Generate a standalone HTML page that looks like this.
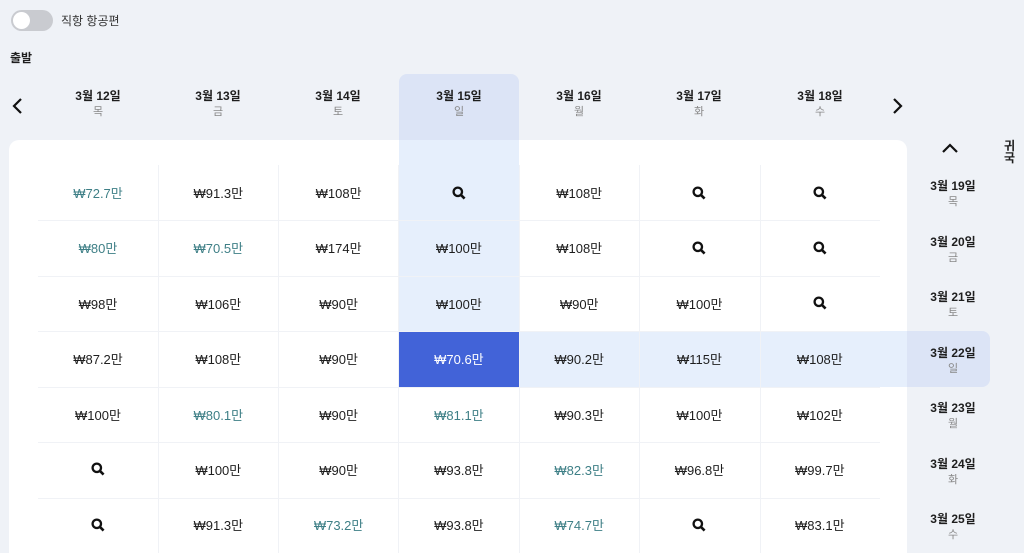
<!DOCTYPE html>
<html style="overflow:hidden;height:553px"><head><meta charset="utf-8"><style>
body{margin:0;width:1024px;height:553px;overflow:hidden;background:#eff2f7;font-family:"Liberation Sans","Noto Sans CJK KR",sans-serif;position:relative;color:#1e1e1e}
.a{position:absolute}
.tog{left:11px;top:10px;width:42px;height:21px;border-radius:11px;background:#c9cbd0}
.tog::after{content:"";position:absolute;left:2px;top:2px;width:17px;height:17px;border-radius:50%;background:#fff}
.hd{width:120px;text-align:center;top:88px;font-size:12px;font-weight:bold;line-height:16px}
.hd span{display:block;font-weight:normal;color:#888;font-size:11px}
.card{left:9px;top:140px;width:898px;height:413px;background:#fff;border-radius:10px 10px 0 0}
.c{width:120px;height:55px;display:flex;align-items:center;justify-content:center;font-size:13px;box-sizing:border-box}
.t{color:#3e7f86}
.rd{width:84px;text-align:center;font-size:12px;font-weight:bold;line-height:16px;left:911px}
.rd span{display:block;font-weight:normal;color:#888;font-size:11px}
.vl{width:1px;background:#f0f2f6;top:165px;height:388px}
.hl{height:1px;background:#f0f2f6;left:38px;width:842px}
</style></head><body>
<div class="a tog"></div>
<div class="a" style="left:61px;top:12px;font-size:12px;color:#333">직항 항공편</div>
<div class="a" style="left:10px;top:49px;font-size:12px;font-weight:bold">출발</div>
<div class="a" style="left:399px;top:74px;width:120px;height:70px;background:#dce4f6;border-radius:8px 8px 0 0"></div>
<svg class="a" style="left:10px;top:97px" width="14" height="18" viewBox="0 0 14 18"><path d="M11 2 4 9l7 7" fill="none" stroke="#111" stroke-width="2.2"/></svg>
<svg class="a" style="left:891px;top:97px" width="14" height="18" viewBox="0 0 14 18"><path d="M3 2l7 7-7 7" fill="none" stroke="#111" stroke-width="2.2"/></svg>
<div class="a hd" style="left:38px">3월 12일<span>목</span></div>
<div class="a hd" style="left:158px">3월 13일<span>금</span></div>
<div class="a hd" style="left:278px">3월 14일<span>토</span></div>
<div class="a hd" style="left:399px">3월 15일<span>일</span></div>
<div class="a hd" style="left:519px">3월 16일<span>월</span></div>
<div class="a hd" style="left:639px">3월 17일<span>화</span></div>
<div class="a hd" style="left:760px">3월 18일<span>수</span></div>
<div class="a card"></div>
<div class="a" style="left:399px;top:140px;width:120px;height:191px;background:#e6effc"></div>
<div class="a" style="left:519px;top:331px;width:388px;height:56px;background:#e6effc"></div>
<div class="a" style="left:907px;top:331px;width:83px;height:56px;background:#dce4f6;border-radius:0 8px 8px 0"></div>
<div class="a" style="left:399px;top:331px;width:120px;height:56px;background:#4263d8"></div>
<div class="a vl" style="left:158px"></div><div class="a vl" style="left:278px"></div><div class="a vl" style="left:398px"></div><div class="a vl" style="left:519px"></div><div class="a vl" style="left:639px"></div><div class="a vl" style="left:760px"></div>
<div class="a hl" style="top:220px"></div><div class="a hl" style="top:276px"></div><div class="a hl" style="top:331px"></div><div class="a hl" style="top:387px"></div><div class="a hl" style="top:442px"></div><div class="a hl" style="top:498px"></div>
<svg width="0" height="0" style="position:absolute"><defs><symbol id="q" viewBox="0 0 14 14"><circle cx="5.8" cy="5.8" r="4.2" fill="none" stroke="#111" stroke-width="2.3"/><path d="M8.8 8.8l3.8 3.8" stroke="#111" stroke-width="2.6"/></symbol></defs></svg>
<div class="a" style="left:38px;top:165px;display:grid;grid-template-columns:repeat(7,120.3px);grid-auto-rows:55.4px">
<div class="c t">₩72.7만</div><div class="c">₩91.3만</div><div class="c">₩108만</div><div class="c"><svg width="14" height="14"><use href="#q"/></svg></div><div class="c">₩108만</div><div class="c"><svg width="14" height="14"><use href="#q"/></svg></div><div class="c"><svg width="14" height="14"><use href="#q"/></svg></div>
<div class="c t">₩80만</div><div class="c t">₩70.5만</div><div class="c">₩174만</div><div class="c">₩100만</div><div class="c">₩108만</div><div class="c"><svg width="14" height="14"><use href="#q"/></svg></div><div class="c"><svg width="14" height="14"><use href="#q"/></svg></div>
<div class="c">₩98만</div><div class="c">₩106만</div><div class="c">₩90만</div><div class="c">₩100만</div><div class="c">₩90만</div><div class="c">₩100만</div><div class="c"><svg width="14" height="14"><use href="#q"/></svg></div>
<div class="c">₩87.2만</div><div class="c">₩108만</div><div class="c">₩90만</div><div class="c" style="color:#fff">₩70.6만</div><div class="c">₩90.2만</div><div class="c">₩115만</div><div class="c">₩108만</div>
<div class="c">₩100만</div><div class="c t">₩80.1만</div><div class="c">₩90만</div><div class="c t">₩81.1만</div><div class="c">₩90.3만</div><div class="c">₩100만</div><div class="c">₩102만</div>
<div class="c"><svg width="14" height="14"><use href="#q"/></svg></div><div class="c">₩100만</div><div class="c">₩90만</div><div class="c">₩93.8만</div><div class="c t">₩82.3만</div><div class="c">₩96.8만</div><div class="c">₩99.7만</div>
<div class="c"><svg width="14" height="14"><use href="#q"/></svg></div><div class="c">₩91.3만</div><div class="c t">₩73.2만</div><div class="c">₩93.8만</div><div class="c t">₩74.7만</div><div class="c"><svg width="14" height="14"><use href="#q"/></svg></div><div class="c">₩83.1만</div>
</div>
<svg class="a" style="left:941px;top:142px" width="18" height="12" viewBox="0 0 18 12"><path d="M2 10l7-7 7 7" fill="none" stroke="#111" stroke-width="2.2"/></svg>
<div class="a" style="left:1004px;top:140px;width:14px;font-size:12px;font-weight:bold;line-height:12px">귀<br>국</div>
<div class="a rd" style="top:178px">3월 19일<span>목</span></div>
<div class="a rd" style="top:234px">3월 20일<span>금</span></div>
<div class="a rd" style="top:289px">3월 21일<span>토</span></div>
<div class="a rd" style="top:345px">3월 22일<span>일</span></div>
<div class="a rd" style="top:400px">3월 23일<span>월</span></div>
<div class="a rd" style="top:456px">3월 24일<span>화</span></div>
<div class="a rd" style="top:511px">3월 25일<span>수</span></div>
</body></html>
